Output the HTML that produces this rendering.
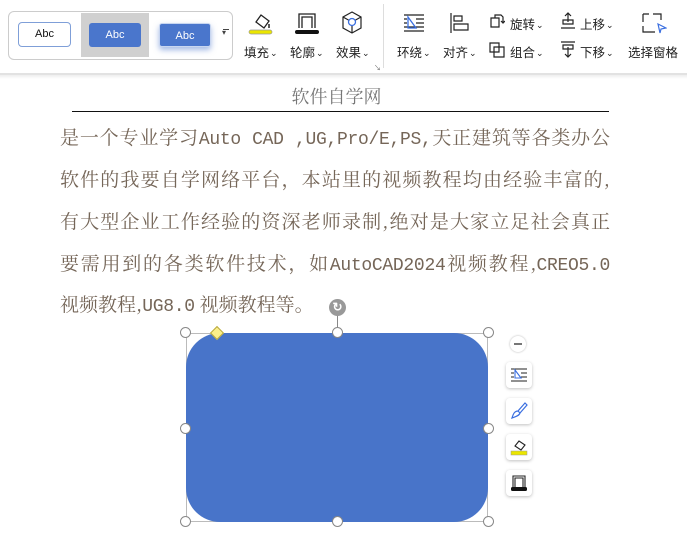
<!DOCTYPE html>
<html><head><meta charset="utf-8"><style>
*{margin:0;padding:0;box-sizing:border-box}
body{width:687px;height:560px;background:#fff;position:relative;overflow:hidden;font-family:"Liberation Sans","Noto Sans CJK SC",sans-serif}
.abs{position:absolute}
.lbl{position:absolute;font-size:12.5px;color:#222;white-space:nowrap}
.car{font-size:9px;margin-left:1px;vertical-align:1px}
.txt{position:absolute;left:60px;width:550px;font-family:"Noto Serif CJK SC","Liberation Serif",serif;font-size:19px;color:#756658;text-align:justify;text-align-last:justify;white-space:nowrap;line-height:24px}
.txt span{font-family:"Liberation Mono",monospace;font-size:18px;letter-spacing:-0.3px}
.h{position:absolute;width:11px;height:11px;border:1px solid #888;border-radius:50%;background:#fff}
.fb{position:absolute;left:506px;width:26px;height:26px;background:#fff;border-radius:4px;box-shadow:0 1px 3px rgba(0,0,0,.25)}
</style></head><body>
<div class="abs" style="left:0;top:73px;width:687px;height:2px;background:#e2e2e2"></div>
<div class="abs" style="left:8px;top:11px;width:225px;height:49px;border:1px solid #ccc;border-radius:6px"></div>
<div class="abs" style="left:18px;top:22px;width:53px;height:25px;border:1.5px solid #7f9fd8;border-radius:4px;font-size:11px;text-align:center;line-height:22px;color:#111">Abc</div>
<div class="abs" style="left:81px;top:13px;width:68px;height:44px;background:#d0d0d0"></div>
<div class="abs" style="left:89px;top:23px;width:52px;height:24px;background:#4a76cc;border-radius:3px;font-size:11px;text-align:center;line-height:24px;color:#fff">Abc</div>
<div class="abs" style="left:159px;top:23px;width:52px;height:24px;background:#4a76cc;border-radius:3px;font-size:11px;text-align:center;line-height:24px;color:#fff;box-shadow:0 3px 6px rgba(74,118,204,.5);border:1px solid #c8d6f0">Abc</div>
<div class="abs" style="left:222px;top:28px;font-size:8px;color:#444">▾</div>
<div class="abs" style="left:223px;top:29px;width:6px;height:1px;background:#444"></div>

<svg class="abs" style="left:246px;top:10px" width="30" height="26"><path d="M10 12 l5-7 8 6 -5 7z" fill="none" stroke="#222" stroke-width="1.3"/><line x1="23" y1="14" x2="23" y2="18" stroke="#222" stroke-width="1.5"/><rect x="3" y="20" width="23" height="4" rx="2" fill="#ebe600" stroke="#999" stroke-width=".7"/></svg>
<div class="lbl" style="left:244px;top:42px">填充<span class="car">⌄</span></div>
<svg class="abs" style="left:293px;top:10px" width="30" height="26"><path d="M6 18 V4 H22 V18 M9 18 V7 H19 V18" fill="none" stroke="#222" stroke-width="1.3"/><rect x="2" y="20" width="24" height="4" rx="2" fill="#111"/></svg>
<div class="lbl" style="left:290px;top:42px">轮廓<span class="car">⌄</span></div>
<svg class="abs" style="left:340px;top:10px" width="24" height="26"><path d="M12 2 L21 7 V18 L12 23 L3 18 V7 Z M3 7 L12 12 L21 7 M12 12 V23" fill="none" stroke="#222" stroke-width="1.2"/><circle cx="12" cy="12" r="3.5" fill="#fff" stroke="#3b6fe0" stroke-width="1.3"/></svg>
<div class="lbl" style="left:336px;top:42px">效果<span class="car">⌄</span></div>
<div class="abs" style="left:374px;top:63px;font-size:7px;color:#666">↘</div>
<div class="abs" style="left:383px;top:4px;width:1px;height:64px;background:#ddd"></div>

<svg class="abs" style="left:403px;top:13px" width="22" height="20"><path d="M1 2H21 M1 18H21 M13 6H21 M13 10H21 M1 14H21 M1 6H4 M1 10H4" stroke="#222" stroke-width="1.2"/><path d="M5 4 L13 15 H5 Z" fill="none" stroke="#3b6fe0" stroke-width="1.3"/></svg>
<div class="lbl" style="left:397px;top:42px">环绕<span class="car">⌄</span></div>
<svg class="abs" style="left:449px;top:13px" width="22" height="20"><path d="M2 0 V20 M5 3 H13 V8 H5 Z M5 11 H19 V17 H5 Z" fill="none" stroke="#222" stroke-width="1.2"/></svg>
<div class="lbl" style="left:443px;top:42px">对齐<span class="car">⌄</span></div>
<svg class="abs" style="left:489px;top:13px" width="16" height="16"><path d="M2 5 H10 V14 H2 Z M6 5 V2 H12 L14 4 V9 M12 8 L14 10 L16 8" fill="none" stroke="#222" stroke-width="1.2"/></svg>
<div class="lbl" style="left:510px;top:14px">旋转<span class="car">⌄</span></div>
<svg class="abs" style="left:489px;top:40px" width="16" height="18"><path d="M1 3 H10 V12 H1 Z M5 7 H15 V17 H5 Z" fill="none" stroke="#222" stroke-width="1.2"/></svg>
<div class="lbl" style="left:510px;top:42px">组合<span class="car">⌄</span></div>
<svg class="abs" style="left:560px;top:12px" width="16" height="18"><path d="M3 8 H13 V12 H3 Z M1 16 H15 M8 10 V1 M5 4 L8 1 L11 4" fill="none" stroke="#222" stroke-width="1.2"/></svg>
<div class="lbl" style="left:580px;top:14px">上移<span class="car">⌄</span></div>
<svg class="abs" style="left:560px;top:40px" width="16" height="18"><path d="M1 2 H15 M3 5 H13 V9 H3 Z M8 7 V17 M5 14 L8 17 L11 14" fill="none" stroke="#222" stroke-width="1.2"/></svg>
<div class="lbl" style="left:580px;top:42px">下移<span class="car">⌄</span></div>
<svg class="abs" style="left:641px;top:12px" width="26" height="24"><path d="M2 2 H8 M12 2 H20 V8 M2 2 V10 M2 14 V20 H14" fill="none" stroke="#222" stroke-width="1.2"/><path d="M17 12 L25 16 L20 17 L19 21 Z" fill="#fff" stroke="#3b6fe0" stroke-width="1.2"/></svg>
<div class="lbl" style="left:628px;top:42px">选择窗格</div>

<div class="abs" style="left:0;top:75px;width:687px;height:4px;background:linear-gradient(#eee,#fff)"></div>
<div class="abs" style="left:0;top:83px;width:687px;text-align:center;font-family:'Noto Serif CJK SC',serif;font-size:18px;color:#777"><span style="position:relative;left:-7px">软件自学网</span></div>
<div class="abs" style="left:72px;top:111px;width:537px;height:1px;background:#111"></div>
<div class="txt" style="top:125px">是一个专业学习<span>Auto CAD ,UG,Pro/E,PS,</span>天正建筑等各类办公</div>
<div class="txt" style="top:167px">软件的我要自学网络平台，本站里的视频教程均由经验丰富的,</div>
<div class="txt" style="top:209px">有大型企业工作经验的资深老师录制,绝对是大家立足社会真正</div>
<div class="txt" style="top:251px">要需用到的各类软件技术，如<span>AutoCAD2024</span>视频教程,<span>CREO5.0</span></div>
<div class="txt" style="top:292px;text-align-last:left;width:auto">视频教程,<span>UG8.0</span> 视频教程等。</div>

<div class="abs" style="left:186px;top:333px;width:302px;height:189px;border:1px solid #bbb"></div>
<div class="abs" style="left:186px;top:333px;width:302px;height:189px;background:#4874c9;border-radius:34px"></div>
<div class="abs" style="left:337px;top:312px;width:1px;height:21px;background:#888"></div>
<div class="abs" style="left:329px;top:299px;width:17px;height:17px;border-radius:50%;background:#999;color:#fff;font-size:12px;line-height:17px;text-align:center;font-weight:bold">↻</div>
<div class="h" style="left:180px;top:327px"></div><div class="h" style="left:332px;top:327px"></div><div class="h" style="left:483px;top:327px"></div>
<div class="h" style="left:180px;top:423px"></div><div class="h" style="left:483px;top:423px"></div>
<div class="h" style="left:180px;top:516px"></div><div class="h" style="left:332px;top:516px"></div><div class="h" style="left:483px;top:516px"></div>
<div class="abs" style="left:212px;top:328px;width:10px;height:10px;background:#fbef8a;border:1px solid #b9a940;transform:rotate(45deg)"></div>

<div class="abs" style="left:510px;top:336px;width:16px;height:16px;border-radius:50%;background:#fff;box-shadow:0 0 2px rgba(0,0,0,.3)"></div>
<div class="abs" style="left:514px;top:343px;width:8px;height:2px;background:#777"></div>
<div class="fb" style="top:362px"><svg width="26" height="26"><path d="M5 7H21 M5 19H21 M15 11H21 M15 15H21 M5 11H8 M5 15H8" stroke="#222" stroke-width="1"/><path d="M9 8 L15 16 H9 Z" fill="none" stroke="#3b6fe0" stroke-width="1.1"/></svg></div>
<div class="fb" style="top:398px"><svg width="26" height="26"><path d="M19 5 L12 13 L14 15 L21 7 Z M12 13 C8 13 7 17 6 20 C9 19 13 18 14 15" fill="none" stroke="#3b6fe0" stroke-width="1.2"/></svg></div>
<div class="fb" style="top:434px"><svg width="26" height="26"><path d="M9 12 l4-5 6 4 -4 5z" fill="none" stroke="#222" stroke-width="1.1"/><rect x="5" y="17" width="16" height="4" fill="#ebe600" stroke="#999" stroke-width=".5"/></svg></div>
<div class="fb" style="top:470px"><svg width="26" height="26"><path d="M7 17 V6 H19 V17 M9 17 V8 H17 V17" fill="none" stroke="#222" stroke-width="1.1"/><rect x="5" y="17" width="16" height="4" rx="1.5" fill="#111"/></svg></div>
</body></html>
